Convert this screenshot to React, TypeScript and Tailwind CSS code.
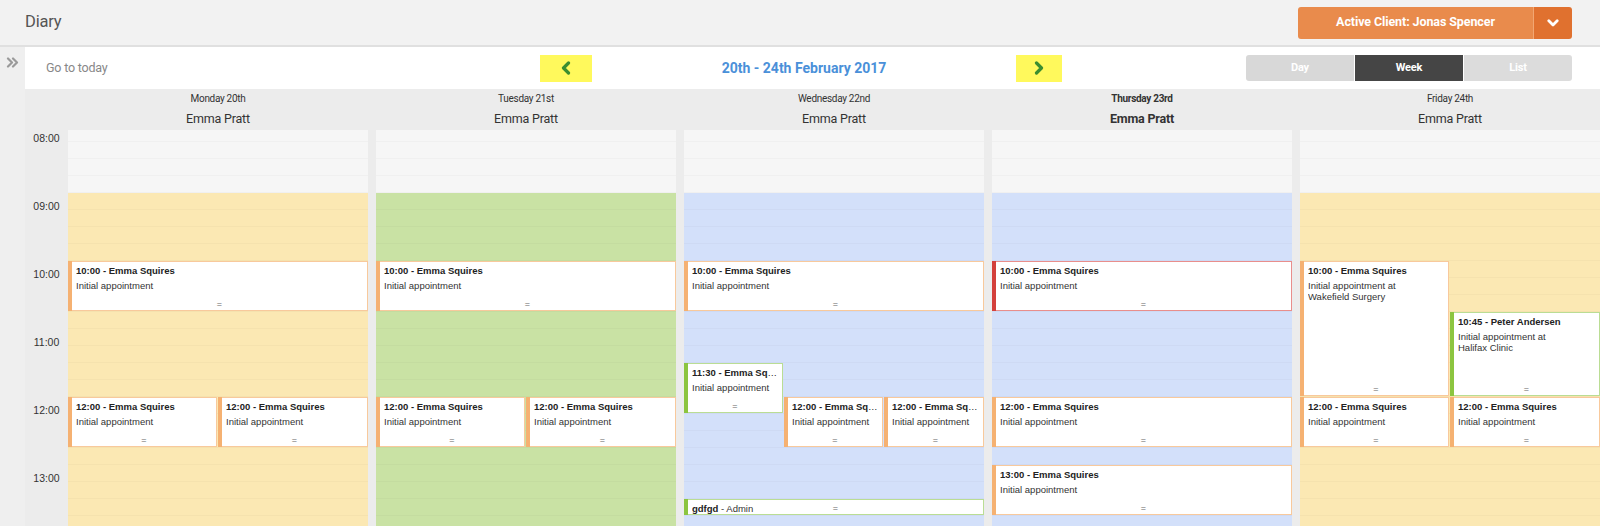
import React from 'react';

const HOUR = 68;

type Color = 'orange' | 'red' | 'green';
type Appt = {
  start: number;
  dur: number;
  col: number;
  n: number;
  span?: number;
  title: string;
  extra?: string;
  sub?: string[];
  color: Color;
};

type Day = {
  name: string;
  person: string;
  bold?: boolean;
  band: string;
  appts: Appt[];
};

const colorMap: Record<Color, { bar: string; border: string }> = {
  orange: { bar: 'bg-[#f5b172]', border: 'border-[#f8c99c]' },
  red: { bar: 'bg-[#d3403c]', border: 'border-[#e98e8c]' },
  green: { bar: 'bg-[#8cc540]', border: 'border-[#badd94]' },
};

const ia = ['Initial appointment'];

const days: Day[] = [
  {
    name: 'Monday 20th',
    person: 'Emma Pratt',
    band: 'bg-[#fbe8b3]',
    appts: [
      { start: 10, dur: 0.75, col: 0, n: 1, title: '10:00 - Emma Squires', sub: ia, color: 'orange' },
      { start: 12, dur: 0.75, col: 0, n: 2, title: '12:00 - Emma Squires', sub: ia, color: 'orange' },
      { start: 12, dur: 0.75, col: 1, n: 2, title: '12:00 - Emma Squires', sub: ia, color: 'orange' },
    ],
  },
  {
    name: 'Tuesday 21st',
    person: 'Emma Pratt',
    band: 'bg-[#c9e2a4]',
    appts: [
      { start: 10, dur: 0.75, col: 0, n: 1, title: '10:00 - Emma Squires', sub: ia, color: 'orange' },
      { start: 12, dur: 0.75, col: 0, n: 2, title: '12:00 - Emma Squires', sub: ia, color: 'orange' },
      { start: 12, dur: 0.75, col: 1, n: 2, title: '12:00 - Emma Squires', sub: ia, color: 'orange' },
    ],
  },
  {
    name: 'Wednesday 22nd',
    person: 'Emma Pratt',
    band: 'bg-[#d3e0fa]',
    appts: [
      { start: 10, dur: 0.75, col: 0, n: 1, title: '10:00 - Emma Squires', sub: ia, color: 'orange' },
      { start: 11.5, dur: 0.75, col: 0, n: 3, title: '11:30 - Emma Squires', sub: ia, color: 'green' },
      { start: 12, dur: 0.75, col: 1, n: 3, title: '12:00 - Emma Squires', sub: ia, color: 'orange' },
      { start: 12, dur: 0.75, col: 2, n: 3, title: '12:00 - Emma Squires', sub: ia, color: 'orange' },
      { start: 13.5, dur: 0.25, col: 0, n: 1, title: 'gdfgd', extra: ' - Admin', color: 'green' },
    ],
  },
  {
    name: 'Thursday 23rd',
    person: 'Emma Pratt',
    bold: true,
    band: 'bg-[#d3e0fa]',
    appts: [
      { start: 10, dur: 0.75, col: 0, n: 1, title: '10:00 - Emma Squires', sub: ia, color: 'red' },
      { start: 12, dur: 0.75, col: 0, n: 1, title: '12:00 - Emma Squires', sub: ia, color: 'orange' },
      { start: 13, dur: 0.75, col: 0, n: 1, title: '13:00 - Emma Squires', sub: ia, color: 'orange' },
    ],
  },
  {
    name: 'Friday 24th',
    person: 'Emma Pratt',
    band: 'bg-[#fbe8b3]',
    appts: [
      {
        start: 10,
        dur: 2,
        col: 0,
        n: 2,
        title: '10:00 - Emma Squires',
        sub: ['Initial appointment at', 'Wakefield Surgery'],
        color: 'orange',
      },
      {
        start: 10.75,
        dur: 1.25,
        col: 1,
        n: 2,
        title: '10:45 - Peter Andersen',
        sub: ['Initial appointment at', 'Halifax Clinic'],
        color: 'green',
      },
      { start: 12, dur: 0.75, col: 0, n: 2, title: '12:00 - Emma Squires', sub: ia, color: 'orange' },
      { start: 12, dur: 0.75, col: 1, n: 2, title: '12:00 - Emma Squires', sub: ia, color: 'orange' },
    ],
  },
];

const hours = [8, 9, 10, 11, 12, 13];

function ApptBox({ a }: { a: Appt }) {
  const c = colorMap[a.color];
  const span = a.span ?? 1;
  const last = a.col + span >= a.n;
  const style: React.CSSProperties = {
    top: (a.start - 8) * HOUR,
    height: a.dur * HOUR - 1,
    left: `${(a.col / a.n) * 100}%`,
    width: `calc(${(span / a.n) * 100}% - ${last ? 0 : 1}px)`,
  };
  return (
    <div className="absolute flex" style={style}>
      <div className={`w-[4px] shrink-0 ${c.bar}`} />
      <div
        className={`relative min-w-0 flex-1 overflow-hidden border border-l-0 bg-white pl-[4px] pr-px pt-[2px] font-['Liberation_Sans',Arial,sans-serif] text-[#222] ${c.border}`}
      >
        <div className="overflow-hidden text-ellipsis whitespace-nowrap text-[9.5px] leading-[14px]">
          <span className="font-bold">{a.title}</span>
          {a.extra && <span className="text-[#333]">{a.extra}</span>}
        </div>
        {a.sub && (
          <div className="mt-[1.5px] text-[9.5px] leading-[11px] text-[#333]">
            {a.sub.map((s) => (
              <div key={s} className="truncate">
                {s}
              </div>
            ))}
          </div>
        )}
        <div className="absolute bottom-0 left-0 right-0 flex h-[11px] items-center justify-center text-[9px] leading-none text-[#666]">
          =
        </div>
      </div>
    </div>
  );
}

function Column({ day }: { day: Day }) {
  return (
    <div className="relative">
      {hours.map((h) => (
        <div key={h} className={h === 8 ? 'bg-[#f6f6f6]' : day.band}>
          {[0, 1, 2, 3].map((q) => (
            <div key={q} className="h-[17px] border-b border-black/[0.025]" />
          ))}
        </div>
      ))}
      {day.appts.map((a, i) => (
        <ApptBox key={i} a={a} />
      ))}
    </div>
  );
}

function Chevron({ dir }: { dir: 'left' | 'right' }) {
  return (
    <svg width="10" height="14" viewBox="0 0 10 14">
      <path
        d={dir === 'left' ? 'M7.5 2 L2.5 7 L7.5 12' : 'M2.5 2 L7.5 7 L2.5 12'}
        stroke="#3b8e30"
        strokeWidth="3.2"
        fill="none"
        strokeLinecap="round"
        strokeLinejoin="round"
      />
    </svg>
  );
}

export default function App() {
  return (
    <div className="h-[526px] w-[1600px] overflow-hidden bg-[#efefef] font-['Roboto',sans-serif]">
      {/* Top header */}
      <header className="flex h-[47px] items-center justify-between border-b-2 border-[#e0e0e0] bg-[#f2f2f2] pl-[25px] pr-[28px]">
        <div className="text-[16.5px] tracking-[-0.2px] text-[#555]">Diary</div>
        <div className="flex h-[32px] w-[274px] overflow-hidden rounded-[3px]">
          <div className="flex flex-1 items-center justify-center bg-[#e98b4c] text-[12.5px] font-bold tracking-[-0.1px] text-white">
            Active Client: Jonas Spencer
          </div>
          <div className="flex w-[39px] items-center justify-center border-l border-[#f2a772] bg-[#e0712f]">
            <svg width="12" height="8" viewBox="0 0 12 8">
              <path
                d="M1.8 1.8 L6 6 L10.2 1.8"
                stroke="#fff"
                strokeWidth="2.8"
                fill="none"
                strokeLinecap="round"
                strokeLinejoin="round"
              />
            </svg>
          </div>
        </div>
      </header>

      <div className="flex h-[479px]">
        {/* Sidebar */}
        <aside className="flex w-[25px] shrink-0 justify-center bg-[#efefef] pt-[10px]">
          <svg width="13" height="11" viewBox="0 0 13 11">
            <path
              d="M2 1.5 L6 5.5 L2 9.5 M7 1.5 L11 5.5 L7 9.5"
              stroke="#9a9a9a"
              strokeWidth="2.2"
              fill="none"
              strokeLinecap="round"
              strokeLinejoin="round"
            />
          </svg>
        </aside>

        <main className="flex min-w-0 flex-1 flex-col">
          {/* Toolbar */}
          <div className="flex h-[42px] shrink-0 items-center bg-white">
            <div className="w-[515px] pl-[21px] text-[12.5px] tracking-[-0.2px] text-[#888]">Go to today</div>
            <div className="flex w-[522px] items-center justify-between">
              <div className="flex h-[27px] w-[52px] items-center justify-center bg-[#fff95c]">
                <Chevron dir="left" />
              </div>
              <div className="text-[14px] font-bold text-[#4a90d9]">20th - 24th February 2017</div>
              <div className="flex h-[27px] w-[46px] items-center justify-center bg-[#fff95c]">
                <Chevron dir="right" />
              </div>
            </div>
            <div className="flex flex-1 justify-end pr-[28px]">
              <div className="flex h-[26px] w-[326px] gap-px overflow-hidden rounded-[3px] bg-white text-[11px] font-bold tracking-[-0.2px] text-white">
                <div className="flex flex-1 items-center justify-center bg-[#d8d8d8]">Day</div>
                <div className="flex flex-1 items-center justify-center bg-[#454545]">Week</div>
                <div className="flex flex-1 items-center justify-center bg-[#dcdcdc]">List</div>
              </div>
            </div>
          </div>

          {/* Day headers */}
          <div className="flex h-[41px] shrink-0 bg-[#ececec]">
            <div className="w-[43px] shrink-0" />
            <div className="grid flex-1 grid-cols-5 gap-2">
              {days.map((d) => (
                <div key={d.name} className={`text-center text-[#333] ${d.bold ? 'font-bold' : ''}`}>
                  <div className="pt-[3px] text-[10px] leading-[14px] tracking-[-0.3px]">{d.name}</div>
                  <div className="mt-[5px] text-[12.5px] leading-[16px] tracking-[-0.2px]">{d.person}</div>
                </div>
              ))}
            </div>
          </div>

          {/* Grid body */}
          <div className="min-h-0 flex-1 overflow-hidden bg-[#ececec]">
            <div className="-mt-[5px] flex">
              <div className="w-[43px] shrink-0 font-['Liberation_Sans',Arial,sans-serif] text-[10.5px] leading-[12px] text-[#333]">
                {hours.map((h) => (
                  <div key={h} className="h-[68px] pt-[7px] text-center">
                    {String(h).padStart(2, '0')}:00
                  </div>
                ))}
              </div>
              <div className="grid flex-1 grid-cols-5 gap-2">
                {days.map((d) => (
                  <Column key={d.name} day={d} />
                ))}
              </div>
            </div>
          </div>
        </main>
      </div>
    </div>
  );
}
